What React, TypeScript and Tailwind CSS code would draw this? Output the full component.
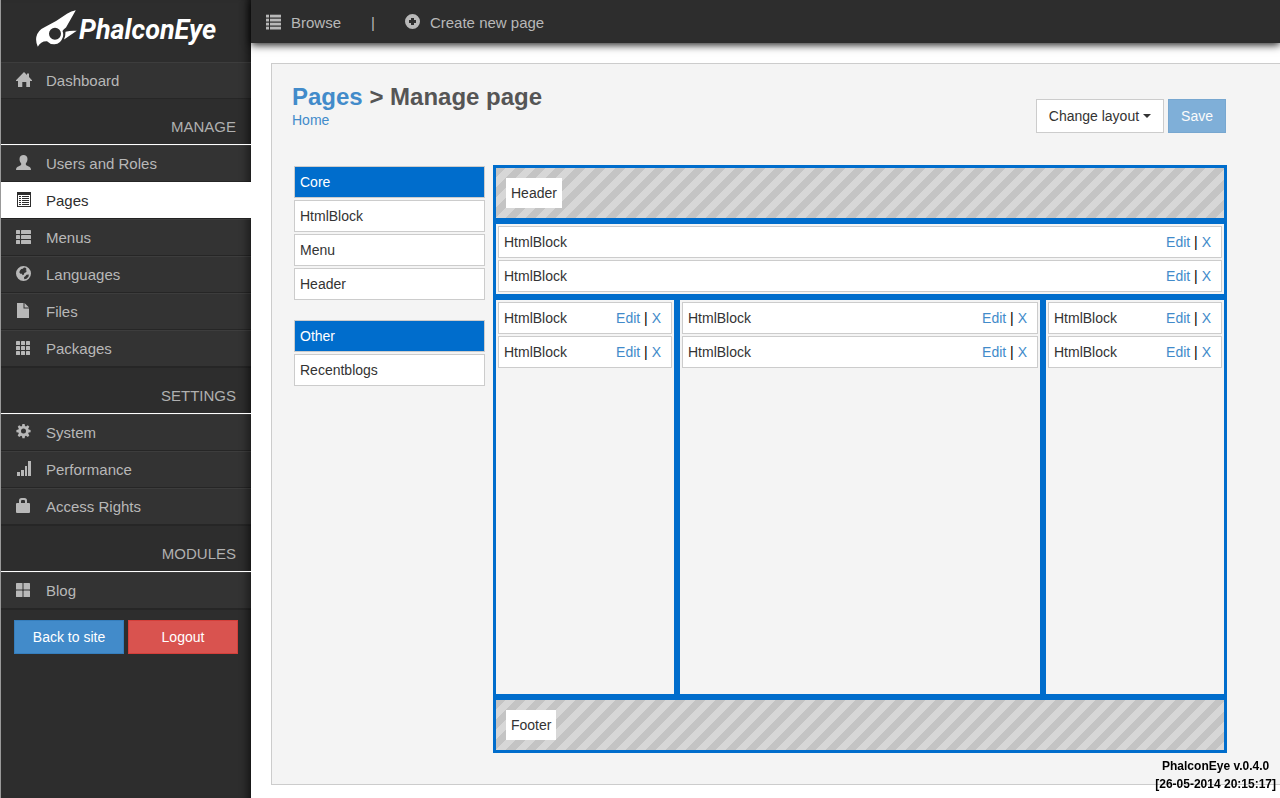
import type { ReactNode } from "react";

type IconName =
  | "home" | "user" | "listAlt" | "thList" | "globe" | "file" | "th"
  | "cog" | "signal" | "lock" | "thLarge" | "list" | "plus";

const shapes: Record<IconName, ReactNode> = {
  home: <path d="M8 0 11 3V1.5h2V5l3 3.2V9h-2v6h-3.700v-5H6.300v5H2V9H0v-.8z" />,
  user: <path d="M7.500 0C9.700 0 11.500 1.500 11.500 4c0 1.800-.7 3.400-1.700 4.400v1.200c.3.900 1.100 1.200 2.300 1.700 1.800.7 2.900 1.400 2.900 3.700H0c0-2.300 1.100-3 2.900-3.700 1.200-.5 2-.8 2.300-1.700V8.400C4.200 7.400 3.500 5.800 3.500 4 3.500 1.500 5.300 0 7.500 0z" />,
  listAlt: (
    <path fillRule="evenodd" d="M1 0h14v15H1zM2 3v11h12V3zM3 4h2v1H3zM6 4h7v1H6zM3 6h2v1H3zM6 6h7v1H6zM3 8h2v1H3zM6 8h7v1H6zM3 10h2v1H3zM6 10h7v1H6zM3 12h2v1H3zM6 12h7v1H6z" />
  ),
  thList: (
    <>
      {[1, 6, 11].map((y) => (
        <g key={y}>
          <rect x="0" y={y} width="4" height="4" rx=".6" />
          <rect x="5" y={y} width="10" height="4" rx=".6" />
        </g>
      ))}
    </>
  ),
  globe: (
    <path fillRule="evenodd" d="M7.500 0a7.500 7.500 0 1 1 0 15 7.500 7.500 0 0 1 0-15zM9.500 1.700 8 1.500 6.800 2.800 5.200 3 4 4.500 3.300 6.300 4.400 7.700 6 7.800 6.500 9.300 8 8.500 8.300 7 10 6.300 10.800 4.700 9.600 4.200 10.600 3zM12.800 8.500 10.500 8.800 9 10.500 8 11 8.300 13.200 10.500 12.700 12.500 10.700z" />
  ),
  file: <path d="M1 0h6.500v5.500H13V15H1zM8.500 0 13 4.500H8.500z" />,
  th: (
    <>
      {[1, 6, 11].map((y) =>
        [0, 5, 10].map((x) => <rect key={`${x}-${y}`} x={x} y={y} width="4" height="4" rx=".6" />),
      )}
    </>
  ),
  cog: (
    <path fillRule="evenodd" d="M6.400 0h2.200l.4 2 1 .4L11.800 1.300l1.500 1.500L12.200 4.600l.4 1 2 .4v2.200l-2 .4-.4 1 1.100 1.800-1.500 1.500L10 11.800l-1 .4-.4 2H6.400l-.4-2-1-.4-1.800 1.100-1.500-1.500 1.100-1.800-.4-1-2-.4V6l2-.4.4-1L1.700 2.800l1.500-1.500L5 2.400l1-.4zM7.500 4.600a2.500 2.500 0 1 0 0 5 2.500 2.500 0 0 0 0-5z" />
  ),
  signal: <path d="M1 11h3v4H1zM5 9h3v6H5zM9 5h2v10H9zM12 0h3v15h-3z" />,
  lock: (
    <path fillRule="evenodd" d="M3 5V2.500Q3 0 5.500 0h3Q11 0 11 2.500V5h2q1 0 1 1v8q0 1-1 1H1q-1 0-1-1V6q0-1 1-1zM5 5h4V3.200Q9 2 8 2H6Q5 2 5 3.200z" />
  ),
  thLarge: (
    <>
      <rect x="0" y="1" width="6.500" height="6.500" rx=".6" />
      <rect x="7.500" y="1" width="6.500" height="6.500" rx=".6" />
      <rect x="0" y="8.500" width="6.500" height="6.500" rx=".6" />
      <rect x="7.500" y="8.500" width="6.500" height="6.500" rx=".6" />
    </>
  ),
  list: (
    <>
      {[1, 5, 9, 13].map((y) => (
        <g key={y}>
          <rect x="0" y={y - 0.3} width="3" height="2.800" />
          <rect x="4" y={y - 0.3} width="11" height="2.800" />
        </g>
      ))}
    </>
  ),
  plus: (
    <path fillRule="evenodd" d="M7.500 0a7.500 7.500 0 1 1 0 15 7.500 7.500 0 0 1 0-15zM6 4v2H4v3h2v2h3V9h2V6H9V4z" />
  ),
};

function Icon({ name, className = "" }: { name: IconName; className?: string }) {
  return (
    <svg viewBox="0 0 16 16" className={`size-4 shrink-0 fill-current ${className}`} aria-hidden="true">
      {shapes[name]}
    </svg>
  );
}

type Item = { label: string; icon: IconName; active?: boolean };

const groups: { title: string; items: Item[] }[] = [
  {
    title: "MANAGE",
    items: [
      { label: "Users and Roles", icon: "user" },
      { label: "Pages", icon: "listAlt", active: true },
      { label: "Menus", icon: "thList" },
      { label: "Languages", icon: "globe" },
      { label: "Files", icon: "file" },
      { label: "Packages", icon: "th" },
    ],
  },
  {
    title: "SETTINGS",
    items: [
      { label: "System", icon: "cog" },
      { label: "Performance", icon: "signal" },
      { label: "Access Rights", icon: "lock" },
    ],
  },
  { title: "MODULES", items: [{ label: "Blog", icon: "thLarge" }] },
];

function NavItem({ label, icon, active }: Item) {
  return (
    <li>
      <a
        href="#"
        aria-current={active ? "page" : undefined}
        className={
          active
            ? "flex h-[37px] items-center gap-[14px] border-y border-t-white border-b-[#222] bg-white pl-[15px] text-[#2d2d2d]"
            : "flex h-[37px] items-center gap-[14px] border-y border-t-white/5 border-b-black/25 bg-white/3 pl-[15px] text-[#b8b8b8]"
        }
      >
        <Icon name={icon} className="mb-px" />
        {label}
      </a>
    </li>
  );
}

function Logo() {
  return (
    <a href="#" className="flex h-[62px] items-start pt-[10px] pl-[35px] text-white">
      <svg viewBox="0 0 41 37" className="h-[37px] w-[41px] shrink-0 fill-current" aria-hidden="true">
        <path
          fillRule="evenodd"
          d="M39.800.2 30 17.500q-2.500 1.600-3.500 3.400 1.200 2.800.4 6.100Q24.800 34 18.500 34.200q-4.500.2-7.500-3-6.500-.2-9.200 5.600Q-.5 32 .3 27q1.200-6.500 8.200-9.800Q21 11.200 31 3.800 35.200.8 39.800.2zM19 17.800a6 6 0 1 0 0 12 6 6 0 0 0 0-12z"
        />
        <path d="M29.500 21.800Q35 20.200 40.800 20.800L28 29.600Q29.600 25.600 29.500 21.800z" />
      </svg>
      <span className="pt-1 pl-[2px] font-['Roboto',sans-serif] text-[27px] leading-[32px] font-bold italic">
        PhalconEye
      </span>
    </a>
  );
}

function Sidebar() {
  return (
    <aside className="w-[251px] shrink-0 border-l border-[#999] bg-[#2d2d2d] text-[15px] shadow-[inset_-10px_0_10px_-8px_#000000b0]">
      <Logo />
      <nav>
        <ul>
          <NavItem label="Dashboard" icon="home" />
        </ul>
        {groups.map((group) => (
          <section key={group.title}>
            <h2 className="flex h-[46px] items-end justify-end border-b border-white pr-[15px] pb-[6px] leading-[22px] text-[#b0b0b0]">
              {group.title}
            </h2>
            <ul className="border-b border-black/15">
              {group.items.map((item) => (
                <NavItem key={item.label} {...item} />
              ))}
            </ul>
          </section>
        ))}
      </nav>
      <div className="flex gap-1 px-[13px] pt-[10px] text-sm text-white">
        <button type="button" className="h-[34px] flex-1 border border-[#357ebd] bg-[#428bca]">
          Back to site
        </button>
        <button type="button" className="h-[34px] flex-1 border border-[#d43f3a] bg-[#d9534f]">
          Logout
        </button>
      </div>
    </aside>
  );
}

function Palette({ title, items }: { title: string; items: string[] }) {
  return (
    <section className="flex flex-col gap-[2px]">
      <h2 className="h-8 border border-[#ccc] bg-[#006dcc] pl-[5px] leading-[30px] text-white">{title}</h2>
      <ul className="flex flex-col gap-[2px]">
        {items.map((item) => (
          <li key={item} className="h-8 border border-[#ccc] bg-white pl-[5px] leading-[30px]">
            {item}
          </li>
        ))}
      </ul>
    </section>
  );
}

function Region({ className = "" }: { className?: string }) {
  return (
    <div className={`flex flex-col gap-[2px] border-[3px] border-[#006dcc] p-[2px] ${className}`}>
      {[0, 1].map((n) => (
        <div key={n} className="flex h-8 justify-between border border-[#ccc] bg-white pr-[10px] pl-[5px] leading-[30px]">
          <span>HtmlBlock</span>
          <span className="text-black">
            <a href="#" className="text-[#428bca]">Edit</a> | <a href="#" className="text-[#428bca]">X</a>
          </span>
        </div>
      ))}
    </div>
  );
}

function Striped({ label }: { label: string }) {
  return (
    <div className="flex h-14 items-start border-[3px] border-[#006dcc] bg-[linear-gradient(135deg,#c4c4c4_25%,#d7d7d7_25%,#d7d7d7_50%,#c4c4c4_50%,#c4c4c4_75%,#d7d7d7_75%)] bg-size-[20px_20px] p-[10px]">
      <span className="bg-white px-[5px] leading-[30px]">{label}</span>
    </div>
  );
}

export default function App() {
  return (
    <div className="flex min-h-screen bg-white font-['Liberation_Sans',Arial,sans-serif] text-sm text-[#333]">
      <Sidebar />
      <div className="flex min-w-0 flex-1 flex-col">
        <header className="flex h-[43px] items-center bg-[#2d2d2d] pl-[15px] text-[15px] text-[#b8b8b8] shadow-[0_2px_8px_#000000e0]">
          <a href="#" className="flex items-center gap-[9px]">
            <Icon name="list" className="mt-px" />
            <span className="pt-[2px]">Browse</span>
          </a>
          <span className="px-[30px] pt-[2px]">|</span>
          <a href="#" className="flex items-center gap-[9px]">
            <Icon name="plus" className="mt-px" />
            <span className="pt-[2px]">Create new page</span>
          </a>
        </header>

        <main className="mt-5 mb-[13px] ml-5 flex-1 border-y border-l border-[#ccc] bg-[#f4f4f4] pr-[53px] pb-[31px] pl-5">
          <div className="flex h-[101px] items-start justify-between">
            <div className="pt-5">
              <h1 className="text-2xl leading-[26px] font-bold text-[#555]">
                <a href="#" className="text-[#428bca]">Pages</a> &gt; Manage page
              </h1>
              <a href="#" className="block leading-5 text-[#428bca]">Home</a>
            </div>
            <div className="flex gap-1 pt-[35px] pr-px">
              <button type="button" aria-haspopup="menu" className="flex h-[34px] items-center gap-1 border border-[#ccc] bg-white px-3">
                Change layout
                <svg viewBox="0 0 8 4" className="h-1 w-2 fill-current" aria-hidden="true">
                  <path d="M0 0h8L4 4z" />
                </svg>
              </button>
              <button type="button" disabled className="h-[34px] border border-[#357ebd] bg-[#428bca] px-3 text-white opacity-65">
                Save
              </button>
            </div>
          </div>

          <div className="flex gap-2 pl-[2px]">
            <aside className="flex w-[191px] shrink-0 flex-col gap-5 pt-px">
              <Palette title="Core" items={["HtmlBlock", "Menu", "Header"]} />
              <Palette title="Other" items={["Recentblogs"]} />
            </aside>
            <div className="min-w-0 flex-1">
              <Striped label="Header" />
              <Region />
              <div className="flex min-h-[400px]">
                <Region className="w-[184px] shrink-0" />
                <Region className="min-w-0 flex-1" />
                <Region className="w-[184px] shrink-0" />
              </div>
              <Striped label="Footer" />
            </div>
          </div>
        </main>
      </div>
      <div className="fixed right-1 bottom-[5px] text-center text-xs leading-[18px] font-bold text-black">
        <p>PhalconEye v.0.4.0</p>
        <p>[26-05-2014 20:15:17]</p>
      </div>
    </div>
  );
}
